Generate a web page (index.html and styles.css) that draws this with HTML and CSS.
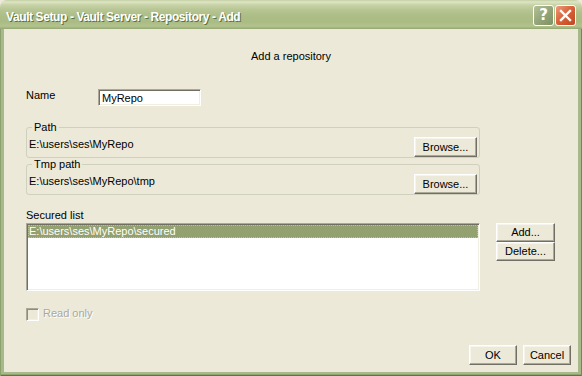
FILE: index.html
```html
<!DOCTYPE html>
<html>
<head>
<meta charset="utf-8">
<title>Vault Setup - Vault Server - Repository - Add</title>
<link rel="stylesheet" href="styles.css">
</head>
<body>
<div class="window">
  <div class="titlebar">
    <span class="title">Vault Setup - Vault Server - Repository - Add</span>
    <div class="caption-buttons">
      <span class="cap-btn help">?</span>
      <span class="cap-btn close"><svg width="13" height="13" viewBox="0 0 13 13"><path d="M2 2 L11 11 M11 2 L2 11" stroke="#fff" stroke-width="2.4" stroke-linecap="square"/></svg></span>
    </div>
  </div>
  <div class="frame">
    <div class="client">
      <div class="heading">Add a repository</div>
      <div class="form">
        <div class="name-row">
          <span class="name-label">Name</span>
          <div class="textbox">MyRepo</div>
        </div>
        <fieldset class="group first">
          <legend>Path</legend>
          <div class="group-row">
            <span class="path">E:\users\ses\MyRepo</span>
            <button class="btn browse">Browse...</button>
          </div>
        </fieldset>
        <fieldset class="group">
          <legend>Tmp path</legend>
          <div class="group-row">
            <span class="path">E:\users\ses\MyRepo\tmp</span>
            <button class="btn browse">Browse...</button>
          </div>
        </fieldset>
        <div class="list-label">Secured list</div>
        <div class="list-row">
          <div class="listbox">
            <div class="item selected">E:\users\ses\MyRepo\secured</div>
          </div>
          <div class="side-buttons">
            <button class="btn side">Add...</button>
            <button class="btn side">Delete...</button>
          </div>
        </div>
        <div class="check-row">
          <span class="checkbox"></span>
          <span class="check-label">Read only</span>
        </div>
      </div>
      <div class="footer">
        <button class="btn dlg">OK</button>
        <button class="btn dlg">Cancel</button>
      </div>
    </div>
  </div>
</div>
</body>
</html>
```
FILE: styles.css
```css
* { box-sizing: border-box; }
html, body { margin: 0; padding: 0; }
body {
  width: 582px;
  height: 376px;
  overflow: hidden;
  background: #ECE9D8;
  font-family: "Liberation Sans", Arial, sans-serif;
  font-size: 11px;
  line-height: 13px;
  color: #000;
}
.window {
  width: 582px;
  height: 376px;
  display: flex;
  flex-direction: column;
}
.titlebar {
  height: 29px;
  flex: none;
  display: flex;
  align-items: flex-start;
  padding: 5px 6px 0 6px;
  border-radius: 7px 7px 0 0;
  background: linear-gradient(to bottom, #C4CFA2 0px, #DDE4C4 2px, #C7D2A7 5px, #B6C592 10px, #ACBD86 16px, #AABB84 22px, #B3C38F 26px, #A1B37E 28px, #8FA46F 29px);
}
.title {
  flex: 1;
  margin-top: 4px;
  font-family: "Liberation Sans", Arial, sans-serif;
  font-weight: bold;
  font-size: 12px;
  letter-spacing: -0.4px;
  line-height: 16px;
  color: #fff;
  text-shadow: 1px 1px 0 #5F7040;
  white-space: nowrap;
}
.caption-buttons {
  display: flex;
  gap: 1px;
}
.cap-btn {
  width: 21px;
  height: 21px;
  border: 1px solid #fff;
  border-radius: 3px;
  display: flex;
  align-items: center;
  justify-content: center;
  color: #fff;
}
.help {
  background: linear-gradient(135deg, #B4C098 0%, #94A579 50%, #7F9264 100%);
  font-family: "DejaVu Sans", sans-serif;
  font-weight: bold;
  font-size: 15px;
  line-height: 19px;
}
.close {
  background: linear-gradient(135deg, #EE9C7E 0%, #D9633C 45%, #C2461F 100%);
}
.close svg { display: block; }
.frame {
  flex: 1;
  display: flex;
  padding: 0 4px 4px 4px;
  background: #A7B988;
  box-shadow: inset 1px 0 #8CA26D, inset -1px 0 #6E8A53, inset 0 -1px #5C7842, inset 0 -2px #8FA56F;
}
.client {
  flex: 1;
  display: flex;
  flex-direction: column;
  background: #ECE9D8;
  padding: 21px 7px 7px 7px;
}
.heading {
  text-align: center;
}
.form {
  margin-left: 15px;
  width: 454px;
  display: flex;
  flex-direction: column;
}
.name-row {
  margin-top: 26px;
  display: flex;
  align-items: flex-start;
}
.name-label {
  width: 72px;
}
.textbox {
  width: 103px;
  height: 17px;
  background: #fff;
  border: 1px solid;
  border-color: #ACA899 #FFFFFF #FFFFFF #ACA899;
  box-shadow: inset 1px 1px #716F64, inset -1px -1px #F1EFE2;
  padding: 2px 3px 0 3px;
}
.group {
  margin: 0;
  padding: 3px 1px 0 1px;
  border: 1px solid #D0D0BF;
  border-radius: 3px;
  min-inline-size: auto;
  width: 454px;
}
.group.first { margin-top: 15px; }
.group legend {
  padding: 0 2px;
  margin-left: 4px;
  line-height: 13px;
}
.group-row {
  display: flex;
  justify-content: space-between;
  align-items: flex-start;
}
.path {
  margin-top: 1px;
  padding-left: 1px;
}
.btn {
  font-family: "Liberation Sans", Arial, sans-serif;
  font-size: 11px;
  line-height: 13px;
  color: #000;
  background: #ECE9D8;
  border: 1px solid;
  border-color: #FFFFFF #716F64 #716F64 #FFFFFF;
  box-shadow: inset -1px -1px #ACA899, inset 1px 1px #F5F4EE;
  padding: 0;
  margin: 0;
  text-align: center;
}
.browse {
  width: 63px;
  height: 20px;
  margin-right: 1px;
}
.list-label {
  margin-top: 14px;
}
.list-row {
  margin-top: 1px;
  display: flex;
  align-items: flex-start;
  width: 529px;
}
.listbox {
  width: 454px;
  height: 68px;
  flex: none;
  background: #fff;
  border: 1px solid;
  border-color: #ACA899 #FFFFFF #FFFFFF #ACA899;
  box-shadow: inset 1px 1px #716F64, inset -1px -1px #F1EFE2;
  padding: 1px 1px 0 1px;
}
.item {
  height: 13px;
  padding-left: 1px;
  white-space: nowrap;
}
.item.selected {
  background: #93A070;
  color: #fff;
  outline: 1px dotted #B9C29A;
  outline-offset: -1px;
}
.side-buttons {
  margin-left: 16px;
  display: flex;
  flex-direction: column;
}
.side {
  width: 59px;
  height: 19px;
}
.check-row {
  margin-top: 16px;
  display: flex;
  align-items: flex-start;
}
.checkbox {
  width: 13px;
  height: 13px;
  margin-top: 1px;
  border: 1px solid;
  border-color: #ACA899 #FFFFFF #FFFFFF #ACA899;
  box-shadow: inset 1px 1px #8E8C82, inset -1px -1px #F1EFE2;
  background: #ECE9D8;
}
.check-label {
  margin-left: 4px;
  color: #ACA899;
  text-shadow: 1px 1px 0 #FFFFFF;
}
.footer {
  margin-top: auto;
  display: flex;
  justify-content: flex-end;
  gap: 6px;
}
.dlg {
  width: 48px;
  height: 20px;
}
```
